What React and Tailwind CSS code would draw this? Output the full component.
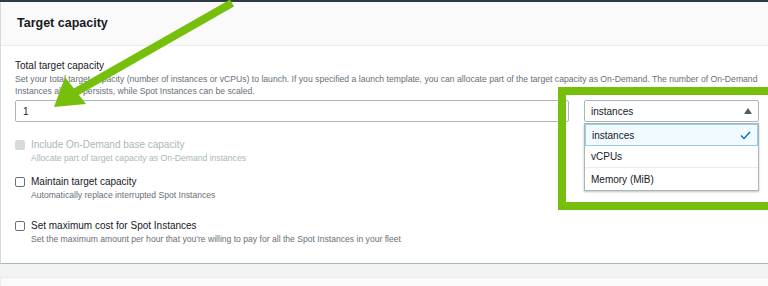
import React from "react";

// Checkbox row with label + hint
const CheckRow = ({ label, hint, disabled, className = "" }) => (
  <div className={`flex items-start gap-[6px] ${className}`}>
    <span
      className={`mt-[1px] w-[10px] h-[10px] rounded-[2px] border shrink-0 ${
        disabled ? "bg-[#d5dbdb] border-[#d5dbdb]" : "bg-white border-[#687078]"
      }`}
    />
    <div className="flex flex-col">
      <span
        className={`text-[10px] leading-[12px] ${
          disabled ? "text-[#aab7b8]" : "text-[#16191f]"
        }`}
      >
        {label}
      </span>
      <span
        className={`text-[8.6px] leading-[12px] mt-[1px] ${
          disabled ? "text-[#aab7b8]" : "text-[#687078]"
        }`}
      >
        {hint}
      </span>
    </div>
  </div>
);

const App = () => {
  return (
    <div
      className="relative w-[768px] h-[286px] overflow-hidden bg-[#f2f3f3]"
      style={{ fontFamily: '"Liberation Sans", Arial, sans-serif' }}
    >
      <div className="h-[2px] bg-[#2f3b48]" />

      {/* panel */}
      <div className="bg-white border-l border-[#d5dbdb] border-b border-b-[#aab7b8] h-[262px] flex flex-col">
        {/* header */}
        <div className="h-[44px] bg-[#fafafa] border-b border-[#eaeded] flex items-center px-4">
          <h2 className="text-[12.5px] font-bold text-[#16191f]">Target capacity</h2>
        </div>

        {/* body */}
        <div className="pl-[14px] pr-[9px] pt-[14px] flex flex-col">
          <div className="text-[10px] leading-[12px] text-[#16191f]">Total target capacity</div>
          <p className="text-[8.65px] leading-[12px] text-[#687078] mt-[1px] whitespace-nowrap">
            Set your total target capacity (number of instances or vCPUs) to launch. If you
            specified a launch template, you can allocate part of the target capacity as
            On-Demand. The number of On-Demand
            <br />
            Instances always persists, while Spot Instances can be scaled.
          </p>

          <div className="flex gap-[15px] mt-[3px]">
            <div className="flex-1 h-[22px] border border-[#aab7b8] rounded-[2px] flex items-center px-[7px] text-[10px] text-[#16191f]">
              1
            </div>
            <div className="w-[175px] h-[22px] border border-[#aab7b8] rounded-[2px] flex items-center justify-between px-[6px] text-[10px] text-[#16191f]">
              <span>instances</span>
              <svg width="8" height="6" viewBox="0 0 8 6">
                <polygon points="4,0 8,6 0,6" fill="#545b64" />
              </svg>
            </div>
          </div>

          <CheckRow
            disabled
            className="mt-[17px]"
            label="Include On-Demand base capacity"
            hint="Allocate part of target capacity as On-Demand instances"
          />
          <CheckRow
            className="mt-[12px]"
            label="Maintain target capacity"
            hint="Automatically replace interrupted Spot Instances"
          />
          <CheckRow
            className="mt-[19px]"
            label="Set maximum cost for Spot Instances"
            hint="Set the maximum amount per hour that you're willing to pay for all the Spot Instances in your fleet"
          />
        </div>
      </div>

      {/* next panel peeking */}
      <div className="mt-[13px] mx-0 h-[20px] bg-[#fafafa] border-t border-l border-[#eaeded]" />

      {/* dropdown menu */}
      <div className="absolute left-[584px] top-[123px] w-[175px] bg-white border border-[#aab7b8] shadow-[0_1px_2px_rgba(0,0,0,0.25)] text-[10px] text-[#16191f]">
        <div className="h-[22px] bg-[#f1faff] border border-[#99cbe4] flex items-center justify-between px-[6px]">
          <span>instances</span>
          <svg width="11" height="9" viewBox="0 0 11 9">
            <path d="M1 4.5 L4 7.5 L10 1" fill="none" stroke="#0073bb" strokeWidth="1.4" />
          </svg>
        </div>
        <div className="h-[22px] border-b border-[#eaeded] flex items-center px-[6px]">vCPUs</div>
        <div className="h-[22px] flex items-center px-[6px]">Memory (MiB)</div>
      </div>

      {/* green highlight box */}
      <div className="absolute left-[558px] top-[87px] w-[220px] h-[123px] border-[8px] border-[#77bf0d]" />

      {/* green arrow */}
      <svg className="absolute left-0 top-0" width="768" height="286">
        <line x1="232" y1="3" x2="74" y2="93" stroke="#77bf0d" strokeWidth="8" />
        <polygon points="54,107 86,104 65,77" fill="#77bf0d" />
      </svg>
    </div>
  );
};

export default App;
